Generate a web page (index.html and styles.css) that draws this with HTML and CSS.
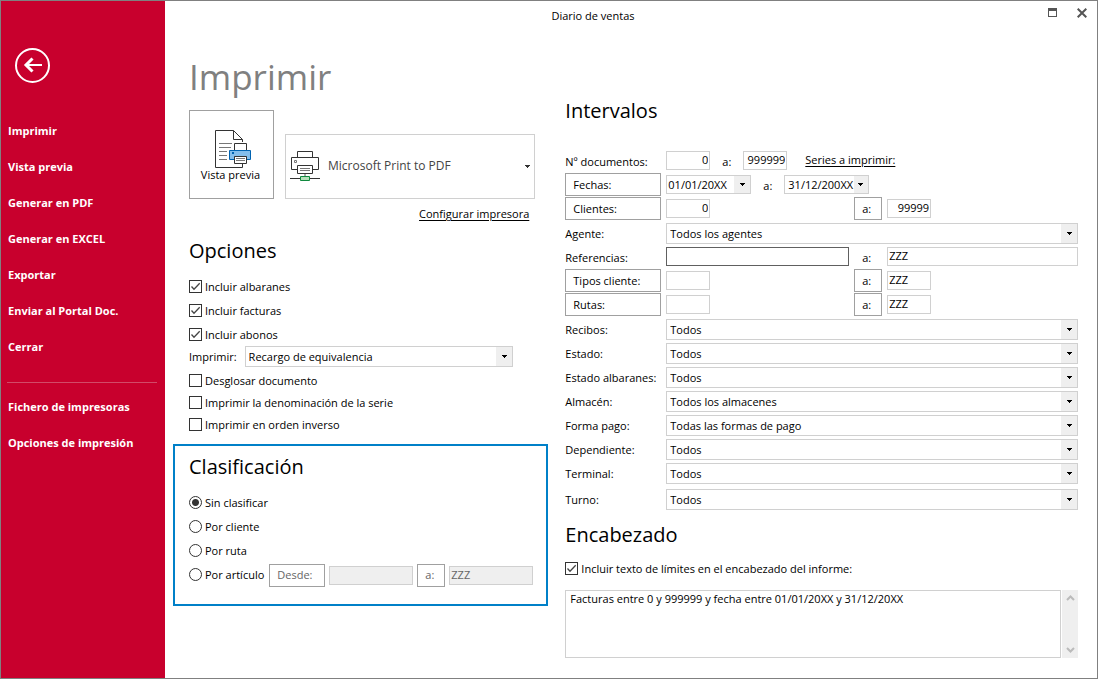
FILE: index.html
```html
<!DOCTYPE html>
<html lang="es">
<head>
<meta charset="utf-8">
<meta name="viewport" content="width=device-width, initial-scale=1">
<title>Diario de ventas</title>
<link rel="stylesheet" href="styles.css">
</head>
<body>
<div class="window">
  <nav class="sidebar" aria-label="Menú">
    <button class="back" type="button" aria-label="Volver">
      <svg width="35" height="35" viewBox="0 0 35 35" fill="none" stroke="#fff">
        <circle cx="17.500" cy="17.500" r="16.500" stroke-width="2"/>
        <path d="M10.500 17H27" stroke-width="2"/>
        <path d="M17.500 10.500L11 17L17.500 23.500" stroke-width="3"/>
      </svg>
    </button>
    <ul class="menu">
      <li><a href="#">Imprimir</a></li>
      <li><a href="#">Vista previa</a></li>
      <li><a href="#">Generar en PDF</a></li>
      <li><a href="#">Generar en EXCEL</a></li>
      <li><a href="#">Exportar</a></li>
      <li><a href="#">Enviar al Portal Doc.</a></li>
      <li><a href="#">Cerrar</a></li>
    </ul>
    <ul class="menu menu-extra">
      <li><a href="#">Fichero de impresoras</a></li>
      <li><a href="#">Opciones de impresión</a></li>
    </ul>
  </nav>

  <div class="content">
    <header class="titlebar">
      <span class="caption">Diario de ventas</span>
      <div class="window-buttons">
        <button type="button" aria-label="Maximizar">
          <svg width="9" height="9" viewBox="0 0 9 9" shape-rendering="crispEdges"><path d="M.5.5h8v8h-8z" fill="none" stroke="#555"/><path d="M0 0h9v3H0z" fill="#555"/></svg>
        </button>
        <button type="button" aria-label="Cerrar">
          <svg width="10" height="10" viewBox="0 0 10 10"><path d="M.7.7l8.600 8.600M9.300.7L.7 9.300" stroke="#555" stroke-width="2"/></svg>
        </button>
      </div>
    </header>

    <main class="columns">
      <div class="left">
        <section class="print">
          <h1>Imprimir</h1>
          <div class="print-row">
            <button class="preview" type="button">
              <svg width="37" height="38" viewBox="0 0 37 38" fill="none">
                <path d="M27.500 12V9.500L18.500.5H.5v37h27V34" stroke="#333"/>
                <path d="M18.500.5v9h9" stroke="#333"/>
                <path d="M4 13.500h13M4 17.500h12M4 21.500h8M4 25.500h8M4 29.500h8" stroke="#777"/>
                <path d="M19.500 13.500h12v7h-12z" fill="#fff" stroke="#333"/>
                <path d="M14.500 20.500h21v9h-4v-3h-12v3h-5z" fill="#83beec" stroke="#0063b1"/>
                <path d="M17 22h2v2h-2z" fill="#0063b1"/>
                <path d="M19.500 26.500h12v7h-12z" fill="#fff" stroke="#333"/>
                <path d="M21 28.500h9M21 30.500h9" stroke="#777"/>
              </svg>
              <span>Vista previa</span>
            </button>
            <div class="printer">
              <svg class="printer-icon" width="30" height="30" viewBox="0 0 30 30" fill="none">
                <path d="M7.500 6.500v-6h15v6" stroke="#333"/>
                <path d="M7.500 18.500h-6v-12h27v12h-6" stroke="#333"/>
                <path d="M4.500 9.500h2v2h-2z" stroke="#777"/>
                <path d="M7.500 14.500h15v8h-15z" fill="#fff" stroke="#333"/>
                <path d="M10 17.500h10M10 19.500h10" stroke="#777"/>
                <path d="M15 23v2" stroke="#aaa" stroke-width="2"/>
                <path d="M0 27.500h30" stroke="#333"/>
                <path d="M10.500 25.500h9v4h-9z" fill="#b5dfb9" stroke="#10893e"/>
              </svg>
              <select class="printer-select" aria-label="Impresora"><option>Microsoft Print to PDF</option></select>
            </div>
          </div>
          <a class="link setup" href="#">Configurar impresora</a>
        </section>

        <section class="options">
          <h2>Opciones</h2>
          <div class="choices">
            <label class="check"><input type="checkbox" checked>Incluir albaranes</label>
            <label class="check"><input type="checkbox" checked>Incluir facturas</label>
            <label class="check"><input type="checkbox" checked>Incluir abonos</label>
          </div>
          <div class="print-type">
            <label for="tipo">Imprimir:</label>
            <select class="combo" id="tipo"><option>Recargo de equivalencia</option></select>
          </div>
          <div class="choices tight">
            <label class="check"><input type="checkbox">Desglosar documento</label>
            <label class="check"><input type="checkbox">Imprimir la denominación de la serie</label>
            <label class="check"><input type="checkbox">Imprimir en orden inverso</label>
          </div>
        </section>

        <section class="classify">
          <h2>Clasificación</h2>
          <div class="choices">
            <label class="check"><input type="radio" name="clase" checked>Sin clasificar</label>
            <label class="check"><input type="radio" name="clase">Por cliente</label>
            <label class="check"><input type="radio" name="clase">Por ruta</label>
            <div class="article">
              <label class="check"><input type="radio" name="clase">Por artículo</label>
              <button class="btn" type="button" disabled>Desde:</button>
              <input class="box" type="text" aria-label="Desde artículo" disabled>
              <button class="btn btn-to" type="button" disabled>a:</button>
              <input class="box" type="text" aria-label="Hasta artículo" value="ZZZ" disabled>
            </div>
          </div>
        </section>
      </div>

      <div class="right">
        <section>
          <h2>Intervalos</h2>
          <div class="rows">
            <div class="row">
              <label for="doc1">Nº documentos:</label>
              <div class="inline">
                <input class="box num" id="doc1" type="text" value="0">
                <label for="doc2">a:</label>
                <input class="box num" id="doc2" type="text" value="999999">
                <a class="link series" href="#">Series a imprimir:</a>
              </div>
            </div>
            <div class="row">
              <button class="btn" type="button">Fechas:</button>
              <div class="inline">
                <select class="combo date" aria-label="Fecha inicial"><option>01/01/20XX</option></select>
                <label for="fecha2">a:</label>
                <select class="combo date date-end" id="fecha2"><option>31/12/200XX</option></select>
              </div>
            </div>
            <div class="row">
              <button class="btn" type="button">Clientes:</button>
              <div class="range">
                <input class="box num" type="text" aria-label="Cliente inicial" value="0">
                <button class="btn btn-to" type="button">a:</button>
                <input class="box num" type="text" aria-label="Cliente final" value="99999">
              </div>
            </div>
            <div class="row"><label for="agente">Agente:</label><select class="combo" id="agente"><option>Todos los agentes</option></select></div>
            <div class="row">
              <label for="ref1">Referencias:</label>
              <div class="range">
                <input class="box wide active" id="ref1" type="text">
                <label class="to" for="ref2">a:</label>
                <input class="box wide" id="ref2" type="text" value="ZZZ">
              </div>
            </div>
            <div class="row">
              <button class="btn" type="button">Tipos cliente:</button>
              <div class="range">
                <input class="box" type="text" aria-label="Tipo de cliente inicial">
                <button class="btn btn-to" type="button">a:</button>
                <input class="box" type="text" aria-label="Tipo de cliente final" value="ZZZ">
              </div>
            </div>
            <div class="row">
              <button class="btn" type="button">Rutas:</button>
              <div class="range">
                <input class="box" type="text" aria-label="Ruta inicial">
                <button class="btn btn-to" type="button">a:</button>
                <input class="box" type="text" aria-label="Ruta final" value="ZZZ">
              </div>
            </div>
            <div class="row"><label for="recibos">Recibos:</label><select class="combo" id="recibos"><option>Todos</option></select></div>
            <div class="row"><label for="estado">Estado:</label><select class="combo" id="estado"><option>Todos</option></select></div>
            <div class="row"><label for="albaranes">Estado albaranes:</label><select class="combo" id="albaranes"><option>Todos</option></select></div>
            <div class="row"><label for="almacen">Almacén:</label><select class="combo" id="almacen"><option>Todos los almacenes</option></select></div>
            <div class="row"><label for="pago">Forma pago:</label><select class="combo" id="pago"><option>Todas las formas de pago</option></select></div>
            <div class="row"><label for="dependiente">Dependiente:</label><select class="combo" id="dependiente"><option>Todos</option></select></div>
            <div class="row"><label for="terminal">Terminal:</label><select class="combo" id="terminal"><option>Todos</option></select></div>
            <div class="row row-last"><label for="turno">Turno:</label><select class="combo" id="turno"><option>Todos</option></select></div>
          </div>
        </section>

        <section class="heading-text">
          <h2>Encabezado</h2>
          <label class="check"><input type="checkbox" checked>Incluir texto de límites en el encabezado del informe:</label>
          <div class="memo">
            <textarea aria-label="Texto del encabezado">Facturas entre 0 y 999999 y fecha entre 01/01/20XX y 31/12/20XX</textarea>
            <div class="scrollbar">
              <button type="button" aria-label="Subir"><svg width="9" height="6" viewBox="0 0 9 6"><path d="M1 5l3.500-3.500L8 5" fill="none" stroke="#bbb" stroke-width="2"/></svg></button>
              <button type="button" aria-label="Bajar"><svg width="9" height="6" viewBox="0 0 9 6"><path d="M1 1l3.500 3.500L8 1" fill="none" stroke="#bbb" stroke-width="2"/></svg></button>
            </div>
          </div>
        </section>
      </div>
    </main>
  </div>
</div>
</body>
</html>
```

FILE: styles.css
```css
* {
  box-sizing: border-box;
}

body {
  margin: 0;
  background: #fff;
  color: #000;
  font: 11px/16px "Open Sans", "Noto Sans", sans-serif;
}

button,
input,
select,
textarea {
  margin: 0;
  font: inherit;
  color: inherit;
  border-radius: 0;
}

svg {
  display: block;
}

.window {
  display: grid;
  grid-template-columns: 164px 1fr;
  min-height: 100vh;
  border: 1px solid #808080;
}

/* Sidebar */
.sidebar {
  padding: 47px 8px 0 6px;
  background: #c8002d;
}

.back {
  display: block;
  margin-left: 8px;
  padding: 0;
  border: 0;
  background: none;
}

.menu {
  margin: 0;
  padding: 30px 0 17px;
  list-style: none;
}

.menu a {
  display: block;
  padding: 10px 1px;
  color: #fff;
  font-weight: 700;
  text-decoration: none;
}

.menu-extra {
  padding: 6px 0;
  border-top: 1px solid #d24a68;
}

/* Title bar */
.titlebar {
  display: flex;
  height: 30px;
}

.caption {
  flex: 1;
  line-height: 30px;
  text-align: center;
}

.window-buttons {
  display: flex;
  align-items: center;
  justify-content: flex-end;
  gap: 20px;
  width: 76px;
  padding: 0 10px 7px 0;
}

.window-buttons button {
  padding: 0;
  border: 0;
  background: none;
}

/* Layout */
.columns {
  display: grid;
  grid-template-columns: 375fr 513fr;
  gap: 17px;
  padding: 22px 19px 20px 8px;
}

h1,
h2 {
  margin: 0;
  font-weight: 400;
}

h1 {
  color: #808080;
  font-size: 35px;
  line-height: 48px;
}

h2 {
  font-size: 20px;
  line-height: 28px;
}

.print,
.options {
  padding: 0 13px 0 16px;
}

.print-row {
  display: flex;
  align-items: flex-end;
  gap: 11px;
  margin-top: 9px;
}

.preview {
  display: flex;
  flex-direction: column;
  align-items: center;
  width: 85px;
  height: 89px;
  padding: 19px 2px 0 0;
  border: 1px solid #a0a0a0;
  background: #fff;
  line-height: 14px;
}

.preview svg {
  margin-left: 5px;
}

.printer {
  position: relative;
  flex: 1;
}

.printer-icon {
  position: absolute;
  top: 17px;
  left: 5px;
  pointer-events: none;
}

.printer-select {
  appearance: none;
  display: block;
  width: 100%;
  height: 65px;
  padding: 0 20px 2px 42px;
  border: 1px solid #d0d0d0;
  background: url("data:image/svg+xml,%3Csvg xmlns='http://www.w3.org/2000/svg' width='5' height='3' shape-rendering='crispEdges'%3E%3Cpath d='M0 0h5v1H0zM1 1h3v1H1zM2 2h1v1H2z' fill='%23333'/%3E%3C/svg%3E") right 4px top 30px no-repeat;
  color: #444;
  font-size: 12px;
}

.link {
  color: #000;
  text-decoration: underline;
  text-underline-offset: 2px;
}

.setup {
  display: block;
  width: fit-content;
  margin: 7px 6px 0 auto;
}

.options {
  margin-top: 15px;
}

.choices {
  display: flex;
  flex-direction: column;
  gap: 8px;
}

.options .choices {
  margin-top: 14px;
}

.options .choices.tight {
  gap: 6px;
  margin-top: 6px;
}

.check {
  display: flex;
  align-items: flex-start;
  gap: 3px;
  white-space: nowrap;
}

.check input {
  appearance: none;
  flex: none;
  width: 13px;
  height: 13px;
  margin-top: 1px;
  border: 1px solid #333;
  background: #fff center no-repeat;
}

.check input[type="checkbox"]:checked {
  background-image: url("data:image/svg+xml,%3Csvg xmlns='http://www.w3.org/2000/svg' width='11' height='11'%3E%3Cpath d='M1.500 5.500L4 8.200L9.700 2.300' fill='none' stroke='%23444' stroke-width='1.300'/%3E%3C/svg%3E");
}

.check input[type="radio"] {
  border-radius: 50%;
}

.check input[type="radio"]:checked {
  background-image: radial-gradient(circle, #333 3px, transparent 4px);
}

.print-type {
  display: flex;
  align-items: center;
  gap: 8px;
  margin: 3px 22px 0 0;
}

.combo {
  appearance: none;
  display: block;
  flex: 1;
  min-width: 0;
  width: 100%;
  height: 21px;
  padding: 0 20px 0 3px;
  border: 1px solid #d0d0d0;
  background:
    url("data:image/svg+xml,%3Csvg xmlns='http://www.w3.org/2000/svg' width='5' height='3' shape-rendering='crispEdges'%3E%3Cpath d='M0 0h5v1H0zM1 1h3v1H1zM2 2h1v1H2z'/%3E%3C/svg%3E") right 5px center no-repeat,
    linear-gradient(#efefef, #efefef) right / 16px 100% no-repeat,
    #fff;
}

.classify {
  margin-top: 11px;
  padding: 7px 13px 21px 14px;
  border: 2px solid #0080c8;
}

.classify .choices {
  margin-top: 14px;
}

.article {
  display: flex;
  align-items: center;
  gap: 4px;
  height: 16px;
}

.article .check {
  margin-right: 1px;
}

.article .btn {
  width: 56px;
}

.article .btn.btn-to {
  width: 28px;
}

.article .box {
  flex: 1;
  width: 84px;
  min-width: 0;
}

.btn {
  height: 23px;
  padding: 0 7px;
  border: 1px solid #a0a0a0;
  background: #fff;
  text-align: left;
  white-space: nowrap;
}

.btn:disabled,
.box:disabled {
  color: #666;
}

.box {
  display: block;
  width: 44px;
  height: 19px;
  padding: 0 1px 2px;
  border: 1px solid #d0d0d0;
  background: #fff;
}

.box:disabled {
  background: #efefef;
}

.num {
  text-align: right;
}

/* Ranges */
.right {
  padding-top: 44px;
}

.rows {
  margin-top: 24px;
}

.row {
  display: grid;
  grid-template-columns: 96px 1fr;
  gap: 5px;
  align-items: start;
  min-height: 24px;
}

.row > label {
  padding-top: 5px;
  white-space: nowrap;
}

.row > .combo,
.row .box,
.row .date {
  margin-top: 2px;
}

.row-last {
  margin-top: 2px;
}

.inline {
  display: flex;
  align-items: flex-start;
}

.inline > label {
  width: 33px;
  padding: 5px 0 0 12px;
}

.series {
  padding-top: 3px;
  margin-left: 18px;
}

.date {
  flex: none;
  width: 85px;
  height: 19px;
  padding: 0 16px 0 1px;
}

.date-end {
  padding: 0 13px 0 3px;
  background-size: auto, 14px 100%, auto;
}

.range {
  display: grid;
  grid-template-columns: 183fr 28px 191fr;
  gap: 5px;
}

.range .to {
  padding: 5px 8px 0;
}

.wide {
  width: 100%;
}

.active {
  border-color: #606060;
}

/* Report heading */
.heading-text {
  margin-top: 10px;
}

.heading-text .check {
  margin-top: 12px;
}

.memo {
  display: flex;
  gap: 1px;
  margin-top: 13px;
}

.memo textarea {
  flex: 1;
  min-width: 0;
  height: 68px;
  padding: 0 4px;
  border: 1px solid #d0d0d0;
  overflow: hidden;
  resize: none;
}

.scrollbar {
  display: flex;
  flex-direction: column;
  justify-content: space-between;
  align-items: center;
  width: 16px;
  padding: 5px 0;
  background: #efefef;
}

.scrollbar button {
  padding: 0;
  border: 0;
  background: none;
}
```
